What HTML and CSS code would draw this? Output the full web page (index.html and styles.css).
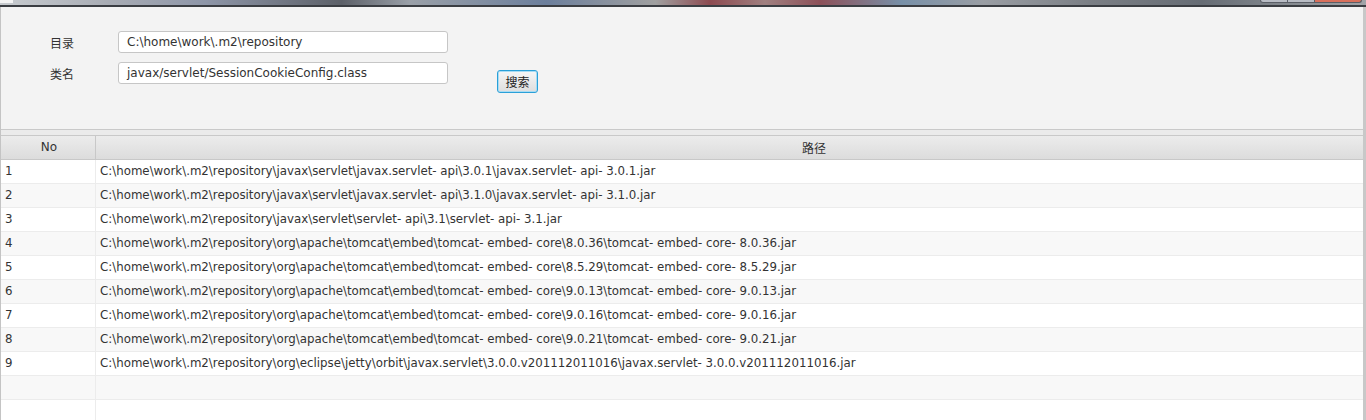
FILE: index.html
```html
<!DOCTYPE html>
<html>
<head>
<meta charset="utf-8">
<link rel="stylesheet" href="styles.css">
</head>
<body>
<div class="taskbar">
  <div class="tb-white"></div>
  <div class="winbtns">
    <span class="wb wb-min"></span><span class="wb wb-max"></span><span class="wb wb-close"></span>
  </div>
</div>
<div class="window">
  <div class="form">
    <div class="fields">
      <div class="field-row">
        <label class="label">目录</label>
        <div class="input">C:\home\work\.m2\repository</div>
      </div>
      <div class="field-row">
        <label class="label">类名</label>
        <div class="input">javax/servlet/SessionCookieConfig.class</div>
      </div>
    </div>
    <button class="btn">搜索</button>
  </div>
  <div class="divider"></div>
  <div class="table">
    <div class="thead">
      <div class="th th-no">No</div>
      <div class="th th-path">路径</div>
    </div>
    <div class="tr"><div class="td td-no">1</div><div class="td td-path">C:\home\work\.m2\repository\javax\servlet\javax.servlet- api\3.0.1\javax.servlet- api- 3.0.1.jar</div></div>
    <div class="tr alt"><div class="td td-no">2</div><div class="td td-path">C:\home\work\.m2\repository\javax\servlet\javax.servlet- api\3.1.0\javax.servlet- api- 3.1.0.jar</div></div>
    <div class="tr"><div class="td td-no">3</div><div class="td td-path">C:\home\work\.m2\repository\javax\servlet\servlet- api\3.1\servlet- api- 3.1.jar</div></div>
    <div class="tr alt"><div class="td td-no">4</div><div class="td td-path">C:\home\work\.m2\repository\org\apache\tomcat\embed\tomcat- embed- core\8.0.36\tomcat- embed- core- 8.0.36.jar</div></div>
    <div class="tr"><div class="td td-no">5</div><div class="td td-path">C:\home\work\.m2\repository\org\apache\tomcat\embed\tomcat- embed- core\8.5.29\tomcat- embed- core- 8.5.29.jar</div></div>
    <div class="tr alt"><div class="td td-no">6</div><div class="td td-path">C:\home\work\.m2\repository\org\apache\tomcat\embed\tomcat- embed- core\9.0.13\tomcat- embed- core- 9.0.13.jar</div></div>
    <div class="tr"><div class="td td-no">7</div><div class="td td-path">C:\home\work\.m2\repository\org\apache\tomcat\embed\tomcat- embed- core\9.0.16\tomcat- embed- core- 9.0.16.jar</div></div>
    <div class="tr alt"><div class="td td-no">8</div><div class="td td-path">C:\home\work\.m2\repository\org\apache\tomcat\embed\tomcat- embed- core\9.0.21\tomcat- embed- core- 9.0.21.jar</div></div>
    <div class="tr"><div class="td td-no">9</div><div class="td td-path">C:\home\work\.m2\repository\org\eclipse\jetty\orbit\javax.servlet\3.0.0.v201112011016\javax.servlet- 3.0.0.v201112011016.jar</div></div>
    <div class="tr alt"><div class="td td-no"></div><div class="td td-path"></div></div>
    <div class="tr"><div class="td td-no"></div><div class="td td-path"></div></div>
  </div>
</div>
</body>
</html>
```
FILE: styles.css
```css
html, body {
  margin: 0;
  padding: 0;
  height: 100%;
  overflow: hidden;
  background: #f3f3f3;
  font-family: "DejaVu Sans", "Noto Sans CJK SC", sans-serif;
  font-size: 11px;
  color: #333;
}
.taskbar {
  position: relative;
  height: 5px;
  background: linear-gradient(90deg, #c8ccd0 0%, #a8acb4 8%, #8e96a8 15%, #5c6068 25%, #9aa0a8 30%, #6c7f9c 40%, #a0a0a0 48%, #8c4a50 52%, #a08080 56%, #8c5058 60%, #7890a8 66%, #9a9ea4 72%, #7a7e84 80%, #666c74 88%, #a0a4a8 100%);
  border-bottom: 2px solid #3a3d42;
}
.tb-white {
  position: absolute;
  left: 0;
  top: 0;
  width: 13px;
  height: 3px;
  background: #f4f4f4;
}
.winbtns {
  position: absolute;
  right: 4px;
  top: 0;
  display: flex;
  height: 3px;
}
.wb {
  display: block;
  height: 3px;
  border: 1px solid #5a5e66;
  border-top: none;
  box-sizing: border-box;
}
.wb-min { width: 28px; background: #b8bcc4; border-radius: 0 0 0 4px; }
.wb-max { width: 27px; background: #b8bcc4; border-left: none; }
.wb-close { width: 47px; background: #d8705c; border-left: none; border-radius: 0 0 4px 0; }
.window {
  border-left: 1px solid #c4c4c4;
  border-right: 3px solid #c8c8c8;
  height: calc(100% - 7px);
  display: flex;
  flex-direction: column;
}
.form {
  height: 122px;
  flex: none;
  display: flex;
  align-items: flex-start;
  padding: 24px 0 0 49px;
  box-sizing: border-box;
}
.fields {
  display: flex;
  flex-direction: column;
  gap: 9px;
}
.field-row {
  display: flex;
  align-items: center;
}
.label {
  width: 68px;
  font-size: 12px;
  color: #333;
}
.input {
  width: 330px;
  height: 22px;
  box-sizing: border-box;
  background: #fff;
  border: 1px solid #c6c6c6;
  border-radius: 3px;
  padding: 0 8px;
  line-height: 20px;
  font-size: 12px;
  color: #333;
}
.btn {
  margin: 39px 0 0 49px;
  width: 41px;
  height: 23px;
  box-sizing: border-box;
  border: 1px solid #2aa0d8;
  border-radius: 3px;
  box-shadow: inset 0 0 0 1px #a8dcf4;
  background: linear-gradient(#f6f6f6, #dedede);
  font-family: "Noto Sans CJK SC", sans-serif;
  font-size: 12px;
  color: #222;
  padding: 0;
  line-height: 19px;
}
.divider {
  height: 5px;
  flex: none;
  border-top: 1px solid #c9c9c9;
  background: #ebebeb;
}
.table {
  flex: 1;
  background: #fff;
  border-top: 1px solid #c9c9c9;
  overflow: hidden;
}
.thead {
  display: flex;
  height: 23px;
  background: linear-gradient(#ececec, #dcdcdc);
  border-bottom: 1px solid #c8c8c8;
}
.th {
  line-height: 23px;
  text-align: center;
  color: #333;
  font-size: 12px;
  box-sizing: border-box;
}
.th-no {
  width: 95px;
  flex: none;
  border-right: 1px solid #c8c8c8;
  padding-left: 2px;
}
.th-path {
  width: 1436px;
  flex: none;
  font-family: "Noto Sans CJK SC", sans-serif;
  font-size: 12px;
}
.tr {
  display: flex;
  height: 24px;
  border-bottom: 1px solid #ececec;
  box-sizing: border-box;
  background: #fff;
}
.tr.alt {
  background: #f8f8f8;
}
.td {
  line-height: 23px;
  white-space: nowrap;
  color: #333;
  font-size: 11.8px;
}
.td-no {
  width: 95px;
  flex: none;
  box-sizing: border-box;
  padding-left: 4px;
  border-right: 1px solid #ececec;
}
.td-path {
  padding-left: 4px;
  flex: 1;
}
```
